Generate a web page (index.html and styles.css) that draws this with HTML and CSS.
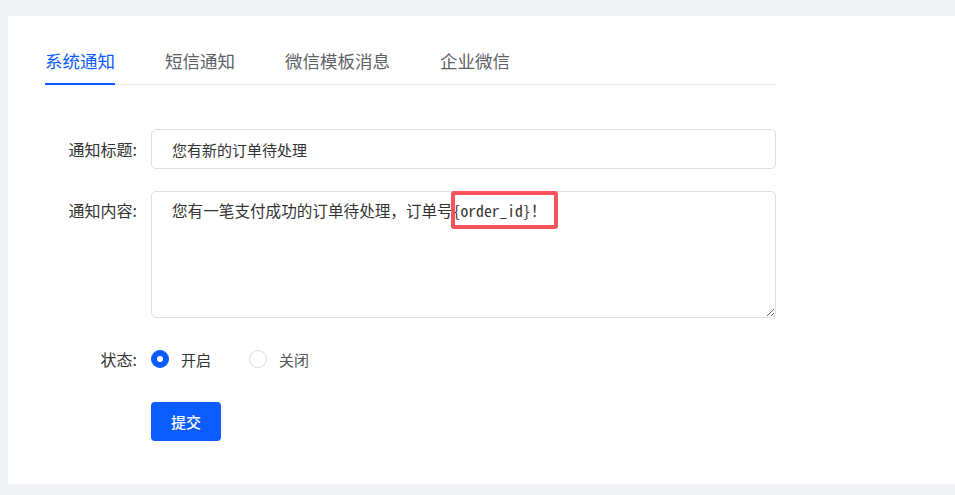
FILE: index.html
```html
<!DOCTYPE html>
<html lang="zh-CN">
<head>
<meta charset="utf-8">
<title>通知设置</title>
<link rel="stylesheet" href="styles.css">
</head>
<body>
<div class="card">
  <div class="tabs">
    <div class="tab active">系统通知</div>
    <div class="tab">短信通知</div>
    <div class="tab">微信模板消息</div>
    <div class="tab">企业微信</div>
  </div>
  <form class="form">
    <div class="row row-input">
      <label class="label">通知标题:</label>
      <input class="input" type="text" value="您有新的订单待处理">
    </div>
    <div class="row row-textarea">
      <label class="label">通知内容:</label>
      <div class="ta-wrap">
        <textarea class="textarea">您有一笔支付成功的订单待处理，订单号{order_id}！</textarea>
        <div class="highlight"></div>
      </div>
    </div>
    <div class="row row-radio">
      <label class="label">状态:</label>
      <div class="radios">
        <span class="radio checked"><span class="dot"></span><span class="rtext">开启</span></span>
        <span class="radio"><span class="dot"></span><span class="rtext">关闭</span></span>
      </div>
    </div>
    <div class="row row-btn">
      <span class="label"></span>
      <button class="btn" type="button">提交</button>
    </div>
  </form>
</div>
</body>
</html>
```
FILE: styles.css
```css
* { box-sizing: border-box; }
html, body { margin: 0; padding: 0; }
body {
  background: #f0f2f5;
  padding: 16px 0 0 8px;
  font-family: "Noto Sans CJK SC", "Noto Sans", sans-serif;
  color: #333;
}
.card {
  background: #fff;
  height: 468px;
  padding: 33px 0 0 37px;
}
.tabs {
  display: flex;
  gap: 50px;
  width: 731px;
  border-bottom: 1px solid #e4e7ed;
}
.tab {
  font-size: 17.5px;
  line-height: 24px;
  color: #5f6166;
  padding: 0 0 10px 0;
  border-bottom: 2px solid transparent;
  margin-bottom: -1px;
}
.tab.active {
  color: #0b5cff;
  border-bottom-color: #0b5cff;
}
.form {
  margin-top: 44px;
  width: 731px;
}
.row {
  display: flex;
  margin-bottom: 22px;
}
.label {
  width: 92px;
  flex: none;
  text-align: right;
  font-size: 16px;
  color: #333;
  margin-right: 14px;
}
.row-input { align-items: center; }
.row-input .label { line-height: 40px; }
.input {
  flex: 1;
  height: 40px;
  border: 1px solid #dcdfe6;
  border-radius: 5px;
  padding: 0 20px;
  font-family: "Noto Sans CJK SC", sans-serif;
  font-size: 15px;
  color: #333;
  outline: none;
}
.row-textarea .label { line-height: 22px; padding-top: 8px; }
.ta-wrap {
  flex: 1;
  position: relative;
  height: 127px;
}
.textarea {
  display: block;
  width: 100%;
  height: 127px;
  border: 1px solid #dcdfe6;
  border-radius: 5px;
  padding: 7px 20px;
  font-family: "Noto Sans Mono CJK SC", "Liberation Mono", "Noto Sans CJK SC", monospace;
  font-size: 15.6px;
  line-height: 22px;
  color: #333;
  outline: none;
  resize: vertical;
}
.highlight {
  position: absolute;
  left: 300px;
  top: 0;
  width: 107px;
  height: 38px;
  border: 4px solid #f5545c;
  border-radius: 3px;
  pointer-events: none;
}
.row-radio {
  align-items: center;
  height: 38px;
  margin-bottom: 24px;
}
.radios {
  display: flex;
  align-items: center;
  gap: 38px;
}
.radio {
  display: flex;
  align-items: center;
  gap: 12px;
  font-size: 15px;
  color: #333;
}
.dot {
  width: 18px;
  height: 18px;
  border-radius: 50%;
  border: 1px solid #dcdfe6;
  background: #fff;
  display: flex;
  align-items: center;
  justify-content: center;
}
.radio.checked .dot {
  background: #0b5cff;
  border-color: #0b5cff;
}
.radio.checked .dot::after {
  content: "";
  width: 6px;
  height: 6px;
  border-radius: 50%;
  background: #fff;
}
.radio:not(.checked) .rtext { color: #555; }
.btn {
  width: 70px;
  height: 39px;
  border: none;
  border-radius: 4px;
  background: #0b5cff;
  color: #fff;
  font-family: "Noto Sans CJK SC", sans-serif;
  font-size: 15px;
  font-weight: 500;
  padding: 0;
}
```
